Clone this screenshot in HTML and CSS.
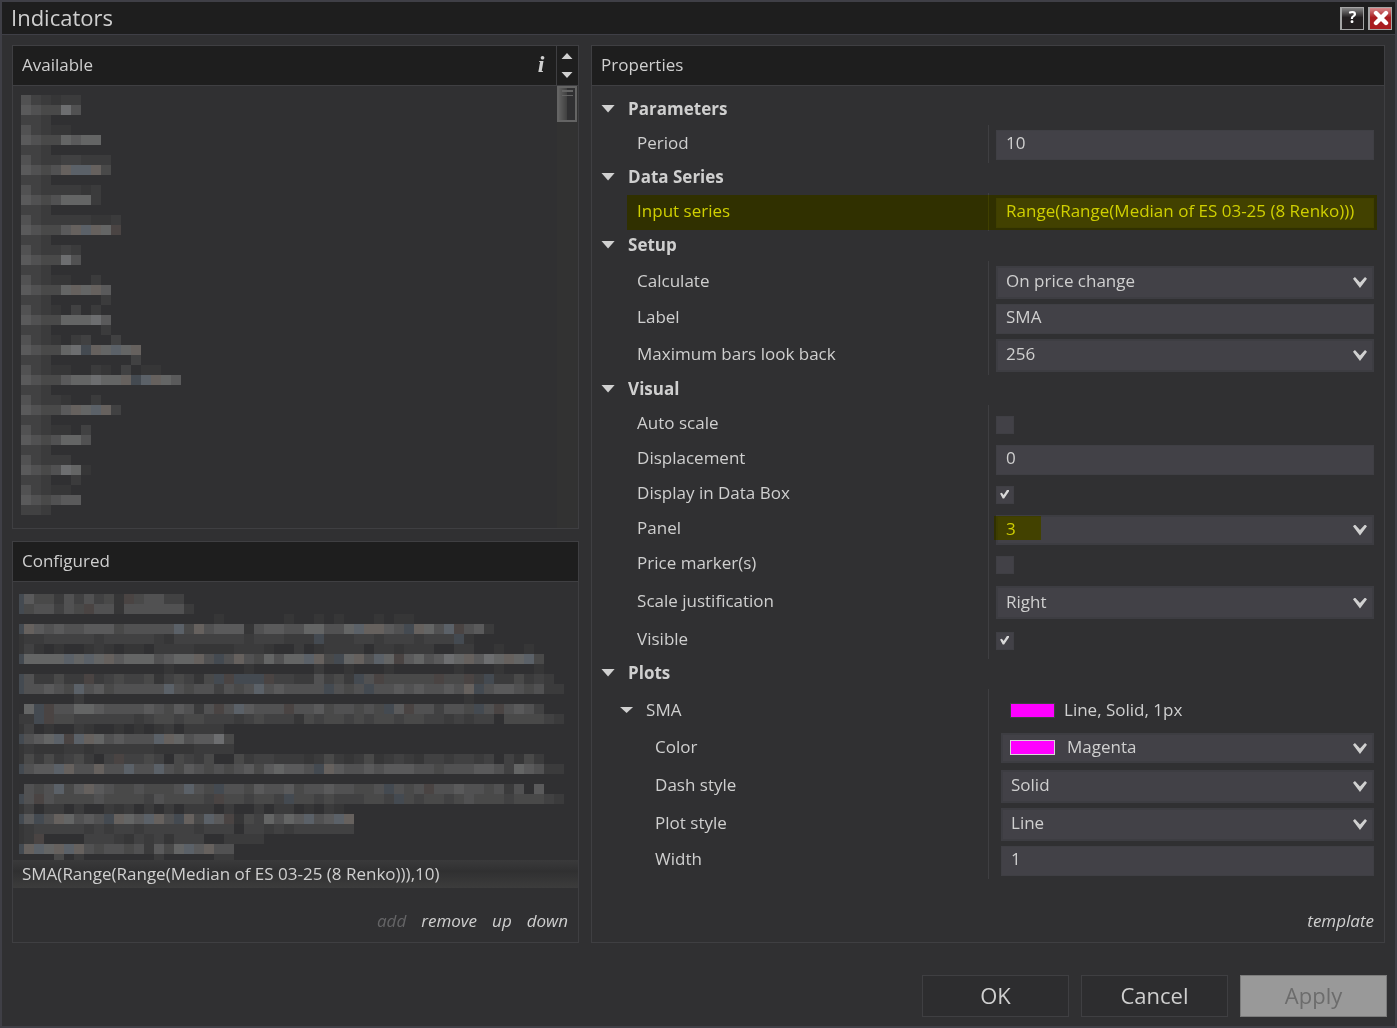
FILE: index.html
```html
<!DOCTYPE html>
<html lang="en">
<head>
  <meta charset="utf-8">
  <title>Indicators</title>
  <link rel="stylesheet" href="styles.css">
</head>
<body>

  <div class="window">
    <header class="titlebar">
      <h1>Indicators</h1>
      <button class="win-btn" aria-label="Help">?</button>
      <button class="win-btn close" aria-label="Close">
        <svg width="16" height="16" viewBox="0 0 16 16"><path d="M3 3L13 13M13 3L3 13" stroke="#fff" stroke-width="4.4" stroke-linecap="round"/></svg>
      </button>
    </header>

    <main class="content">
      <div class="left">
        <section class="panel">
          <div class="panel-head">
            <h2>Available</h2>
            <button class="info" aria-label="Info">i</button>
            <div class="spin">
              <svg width="12" height="26" viewBox="0 0 12 26" fill="#d0d0d0"><path d="M6 0L11.500 6H.5zM.5 19h11L6 25z"/></svg>
            </div>
          </div>
          <div class="list-wrap">
            <svg class="mosaic" id="available" width="170" height="420" viewBox="0 0 170 420"></svg>
            <div class="scroll"><div class="thumb"></div></div>
          </div>
        </section>

        <section class="panel">
          <div class="panel-head"><h2>Configured</h2></div>
          <svg class="mosaic configured" id="configured" width="545" height="266" viewBox="5 0 545 266"></svg>
          <div class="selected">SMA(Range(Range(Median of ES 03-25 (8 Renko))),10)</div>
          <div class="panel-foot">
            <button disabled>add</button>
            <button>remove</button>
            <button>up</button>
            <button>down</button>
          </div>
        </section>
      </div>

      <section class="panel">
        <div class="panel-head"><h2>Properties</h2></div>
        <div class="props">

          <button class="section">Parameters</button>
          <div class="group">
            <div class="row">
              <label for="period">Period</label>
              <div class="value"><input type="text" id="period" value="10"></div>
            </div>
          </div>

          <button class="section">Data Series</button>
          <div class="group">
            <div class="row marked">
              <label for="input">Input series</label>
              <div class="value"><input type="text" id="input" value="Range(Range(Median of ES 03-25 (8 Renko)))"></div>
            </div>
          </div>

          <button class="section">Setup</button>
          <div class="group">
            <div class="row combo">
              <label for="calculate">Calculate</label>
              <div class="value"><div class="select"><select id="calculate"><option>On price change</option></select></div></div>
            </div>
            <div class="row">
              <label for="label">Label</label>
              <div class="value"><input type="text" id="label" value="SMA"></div>
            </div>
            <div class="row combo">
              <label for="lookback">Maximum bars look back</label>
              <div class="value"><div class="select"><select id="lookback"><option>256</option></select></div></div>
            </div>
          </div>

          <button class="section">Visual</button>
          <div class="group">
            <div class="row">
              <label for="autoscale">Auto scale</label>
              <div class="value"><input type="checkbox" id="autoscale"></div>
            </div>
            <div class="row">
              <label for="displacement">Displacement</label>
              <div class="value"><input type="text" id="displacement" value="0"></div>
            </div>
            <div class="row">
              <label for="databox">Display in Data Box</label>
              <div class="value"><input type="checkbox" id="databox" checked></div>
            </div>
            <div class="row">
              <label for="panel">Panel</label>
              <div class="value"><div class="select low marked-value"><select id="panel"><option>3</option></select></div></div>
            </div>
            <div class="row">
              <label for="markers">Price marker(s)</label>
              <div class="value"><input type="checkbox" id="markers"></div>
            </div>
            <div class="row combo wide">
              <label for="justify">Scale justification</label>
              <div class="value"><div class="select"><select id="justify"><option>Right</option></select></div></div>
            </div>
            <div class="row">
              <label for="visible">Visible</label>
              <div class="value"><input type="checkbox" id="visible" checked></div>
            </div>
          </div>

          <button class="section">Plots</button>
          <div class="group plots">
            <div class="row combo">
              <button class="sub">SMA</button>
              <div class="value"><span class="swatch"></span><span>Line, Solid, 1px</span></div>
            </div>
            <div class="row combo">
              <label for="color">Color</label>
              <div class="value"><div class="select low color"><span class="swatch lit"></span><select id="color"><option>Magenta</option></select></div></div>
            </div>
            <div class="row combo">
              <label for="dash">Dash style</label>
              <div class="value"><div class="select"><select id="dash"><option>Solid</option></select></div></div>
            </div>
            <div class="row combo">
              <label for="plot">Plot style</label>
              <div class="value"><div class="select"><select id="plot"><option>Line</option></select></div></div>
            </div>
            <div class="row">
              <label for="width">Width</label>
              <div class="value"><input type="text" id="width" value="1"></div>
            </div>
          </div>
        </div>
        <div class="panel-foot"><button>template</button></div>
      </section>
    </main>

    <footer class="actions">
      <button>OK</button>
      <button>Cancel</button>
      <button disabled>Apply</button>
    </footer>
  </div>

  <script>
    // shades of the pixelated names, "." is the background
    const shades = {
      1: "#363637", 2: "#3b3b3c", 3: "#414142", 4: "#494949", 5: "#515152",
      6: "#5a5a5b", 7: "#646565", 8: "#6d6e70",
      b: "#444a51", c: "#5b6168", r: "#4a4443", s: "#66615e"
    };

    // three lines of cells for each name
    const available = [
      "532122", "654485", "332",
      "53211", "65447677", "332",
      "532233222", "6545sccs4", "332",
      "53222212", "65457772", "332",
      "5322222112", "65446scs7r", "332",
      "532232", "654485", "332",
      "53211..2", "65447s7s6", "332.....2",
      "5321.3.2", "654477786", "332.....2",
      "5321.23..3", "654478bs7c7s", "332........3",
      "53211..21.3.11", "6544677877sbcs76", "332",
      "53221..2", "65446s7cs3", "332",
      "53211.3", "6545775", "332",
      "53222", "6545871", "332..2",
      "53211", "654566", "332"
    ];

    const configured = [
      "b6442535341r45533",
      "b455354r5515555552",
      "....................1......1..1.1...1.11",
      "bs65655666455555c4s566615665577557css65bs75cr562",
      "122333332333332133333332333222b2223323332333b1",
      "131.1..121.11.222211112221..2.12222.221222..22..1..1",
      "b7777c7c7s67775677s5b5s547577cs4b7s5c7r675687s687s7c4",
      "...............1.......1......2..1...1......1...1...1",
      "b522422r234334134314brbbbr33225342b5r44444r44r3b224232",
      "b55654c56455555c54553545c565555b545b556565565sb56654522",
      "......2......................................1........",
      ".7br5577655556546525r5c6555r556455454b6r553554b5r5653",
      "22br44333333234434433323433314344343443443323233.444432",
      "13.1..21..1.1.12.2222",
      "b567crcs756555cs756684",
      "1211122122222211112222",
      "14242342.3r3343.4324..42332221242124123213323323.3142",
      "b566cs55s55c55c546545456467665bs65565666554555665376522",
      "",
      ".545c46s654454445c54b5546556455655445b545r556554525.6",
      "b5r54444544443544443r443443b4434333443b4344345444344432",
      "13.22.2..212.2.2.222.2..2.22.1.21",
      "b6b5s7565bs76cs5bs4c6r1437576c56cs",
      "1233333232332333332333.33232333333",
      "12r....333213231333..2222",
      "bsc7scs5455452647c6s55",
      "....4.2.......2.....22"
    ];

    function drawMosaic(id, rows) {
      let cells = "";
      rows.forEach((row, y) => {
        [...row].forEach((shade, x) => {
          if (shades[shade]) {
            cells += `<rect x="${x * 10}" y="${y * 10}" width="10" height="10" fill="${shades[shade]}"/>`;
          }
        });
      });
      document.getElementById(id).innerHTML = cells;
    }

    drawMosaic("available", available);
    drawMosaic("configured", configured);
  </script>

</body>
</html>
```
FILE: styles.css
```css
* {
  box-sizing: border-box;
}

body {
  margin: 0;
  background: #303032;
  color: #cfcfcf;
  font-family: "Open Sans", "Noto Sans", sans-serif;
  font-size: 17px;
  line-height: 24px;
}

button, input, select {
  margin: 0;
  padding: 0;
  border: none;
  border-radius: 0;
  background: none;
  color: inherit;
  font: inherit;
}

h1, h2 {
  margin: 0;
  font-weight: normal;
}

.window {
  display: flex;
  flex-direction: column;
  min-height: 100vh;
  border: 2px solid #3f3f46;
}

/* Title bar */
.titlebar {
  display: flex;
  align-items: center;
  gap: 4px;
  height: 33px;
  padding: 0 3px 0 9px;
  background: #1e1e1e;
  border-bottom: 1px solid #3f3f46;
}

.titlebar h1 {
  flex: 1;
  padding-bottom: 2px;
  font-size: 22px;
  line-height: 30px;
}

.win-btn {
  width: 24px;
  height: 23px;
  padding-bottom: 3px;
  border: 1px solid #a5a5a5;
  border-left-width: 2px;
  background: linear-gradient(#858585, #231f20 45%);
  color: #fff;
  font-size: 16px;
  font-weight: bold;
  line-height: 16px;
}

.win-btn.close {
  display: flex;
  align-items: center;
  justify-content: center;
  padding: 0;
  background: linear-gradient(#d98a8c, #a81c20 45%);
}

/* Panels */
.content {
  flex: 1;
  display: grid;
  grid-template-columns: 5fr 7fr;
  gap: 12px;
  padding: 10px 10px 0;
}

.left {
  display: grid;
  grid-template-rows: 41fr 34fr;
  gap: 12px;
}

.panel {
  display: flex;
  flex-direction: column;
  min-width: 0;
  border: 1px solid #3f3f42;
}

.panel-head {
  display: flex;
  align-items: center;
  height: 40px;
  padding-left: 9px;
  background: #1e1e1e;
  border-bottom: 1px solid #3f3f42;
}

.panel-head h2 {
  flex: 1;
  padding-bottom: 2px;
  font-size: 17px;
}

.info {
  width: 30px;
  padding-bottom: 4px;
  font-family: "Liberation Serif", serif;
  font-size: 24px;
  font-style: italic;
  font-weight: bold;
}

.spin {
  display: flex;
  align-items: center;
  justify-content: center;
  align-self: stretch;
  width: 22px;
  padding-right: 2px;
  border-left: 1px solid #3f3f42;
}

.list-wrap {
  flex: 1;
  display: flex;
  justify-content: space-between;
}

.mosaic {
  display: block;
  flex: none;
  margin: 9px 0 0 8px;
}

.mosaic.configured {
  margin: 12px 0 0 6px;
}

.scroll {
  width: 21px;
  padding-right: 1px;
  background: #323232;
}

.thumb {
  height: 36px;
  border: 2px solid #646464;
  background:
    linear-gradient(#646464, #646464) 3px 2px / 11px 2px no-repeat,
    linear-gradient(#646464, #646464) 3px 7px / 11px 1px no-repeat,
    linear-gradient(90deg, #606060, #404040 50%, #303032 50%);
}

.selected {
  height: 28px;
  padding: 0 9px;
  background: linear-gradient(#3a3a3b, #303031 40%, #3c3c3c);
  line-height: 28px;
}

.panel-foot {
  display: flex;
  justify-content: flex-end;
  gap: 15px;
  margin-top: auto;
  padding: 0 10px 9px;
}

.panel-foot button {
  font-style: italic;
}

.panel-foot button:disabled {
  color: #646466;
}

/* Property grid */
.props {
  padding-top: 9px;
}

.section {
  display: flex;
  align-items: center;
  gap: 13px;
  height: 30px;
  padding: 0 0 3px 9px;
  font-weight: bold;
}

.section::before,
.sub::before {
  content: "";
  width: 14px;
  height: 8px;
  background: #d0d0d0;
  clip-path: polygon(0 0, 100% 0, 50% 100%);
}

.group {
  padding: 2px 0 1px;
  background: linear-gradient(#3f3f42, #3f3f42) 50% 0 / 1px 100% no-repeat;
}

.row {
  position: relative;
  display: grid;
  grid-template-columns: 1fr 1fr;
  align-items: center;
  height: 35px;
}

.row.combo {
  height: 38px;
}

.row.combo.wide {
  height: 41px;
}

.row label {
  padding: 0 0 3px 45px;
}

.value {
  display: flex;
  align-items: center;
  padding: 0 10px 0 8px;
}

input[type="text"],
select {
  width: 100%;
  height: 30px;
  padding: 0 9px 4px;
  border: 1px solid #3f3f44;
  background: #424147;
}

input[type="checkbox"] {
  appearance: none;
  width: 18px;
  height: 18px;
  border: 1px solid #3f3f44;
  background: #424147;
}

input[type="checkbox"]:checked::after {
  content: "";
  display: block;
  width: 9px;
  height: 9px;
  margin: 3px 0 0 3px;
  background: #d8d8d8;
  clip-path: polygon(0 45%, 20% 35%, 40% 60%, 80% 0, 100% 0, 100% 20%, 45% 100%, 30% 100%);
}

.select {
  position: relative;
  width: 100%;
}

.select select {
  display: block;
  appearance: none;
  height: 33px;
  padding: 0 30px 2px 8px;
  border: 2px solid #3d3d42;
}

.select.low select {
  height: 30px;
}

.select::after {
  content: "";
  position: absolute;
  right: 7px;
  top: 50%;
  width: 14px;
  height: 11px;
  margin-top: -5px;
  background: #d0d0d0;
  clip-path: polygon(0 16%, 14% 0, 50% 50%, 86% 0, 100% 16%, 50% 100%);
  pointer-events: none;
}

.plots .row label {
  padding-left: 63px;
}

.plots .value {
  padding-left: 13px;
}

.sub {
  display: flex;
  align-items: center;
  gap: 13px;
  padding: 0 0 0 28px;
}

.sub::before {
  width: 13px;
  height: 6px;
}

.swatch {
  width: 45px;
  height: 15px;
  margin: 0 9px;
  border: 1px solid #3f3f42;
  background: #f0f;
}

.swatch.lit {
  position: absolute;
  top: 7px;
  left: 9px;
  margin: 0;
  border: 1px solid #d8d8d8;
}

.color select {
  padding-left: 64px;
}

/* Yellow highlighter strokes */
.marked::after,
.marked-value::before {
  content: "";
  position: absolute;
  background: #ff0;
  mix-blend-mode: multiply;
  pointer-events: none;
}

.marked::after {
  inset: 0 7px 0 35px;
}

.marked-value::before {
  top: 1px;
  left: -2px;
  z-index: 1;
  width: 47px;
  height: 24px;
}

/* Dialog buttons */
.actions {
  display: flex;
  justify-content: flex-end;
  gap: 12px;
  padding: 32px 8px 9px;
}

.actions button {
  width: 147px;
  height: 42px;
  padding-bottom: 2px;
  border: 1px solid #3f3f42;
  background: #2d2d2f;
  font-size: 22px;
}

.actions button:disabled {
  border-color: #7c7c7c;
  background: #999;
  color: #6c6c6c;
}
```
